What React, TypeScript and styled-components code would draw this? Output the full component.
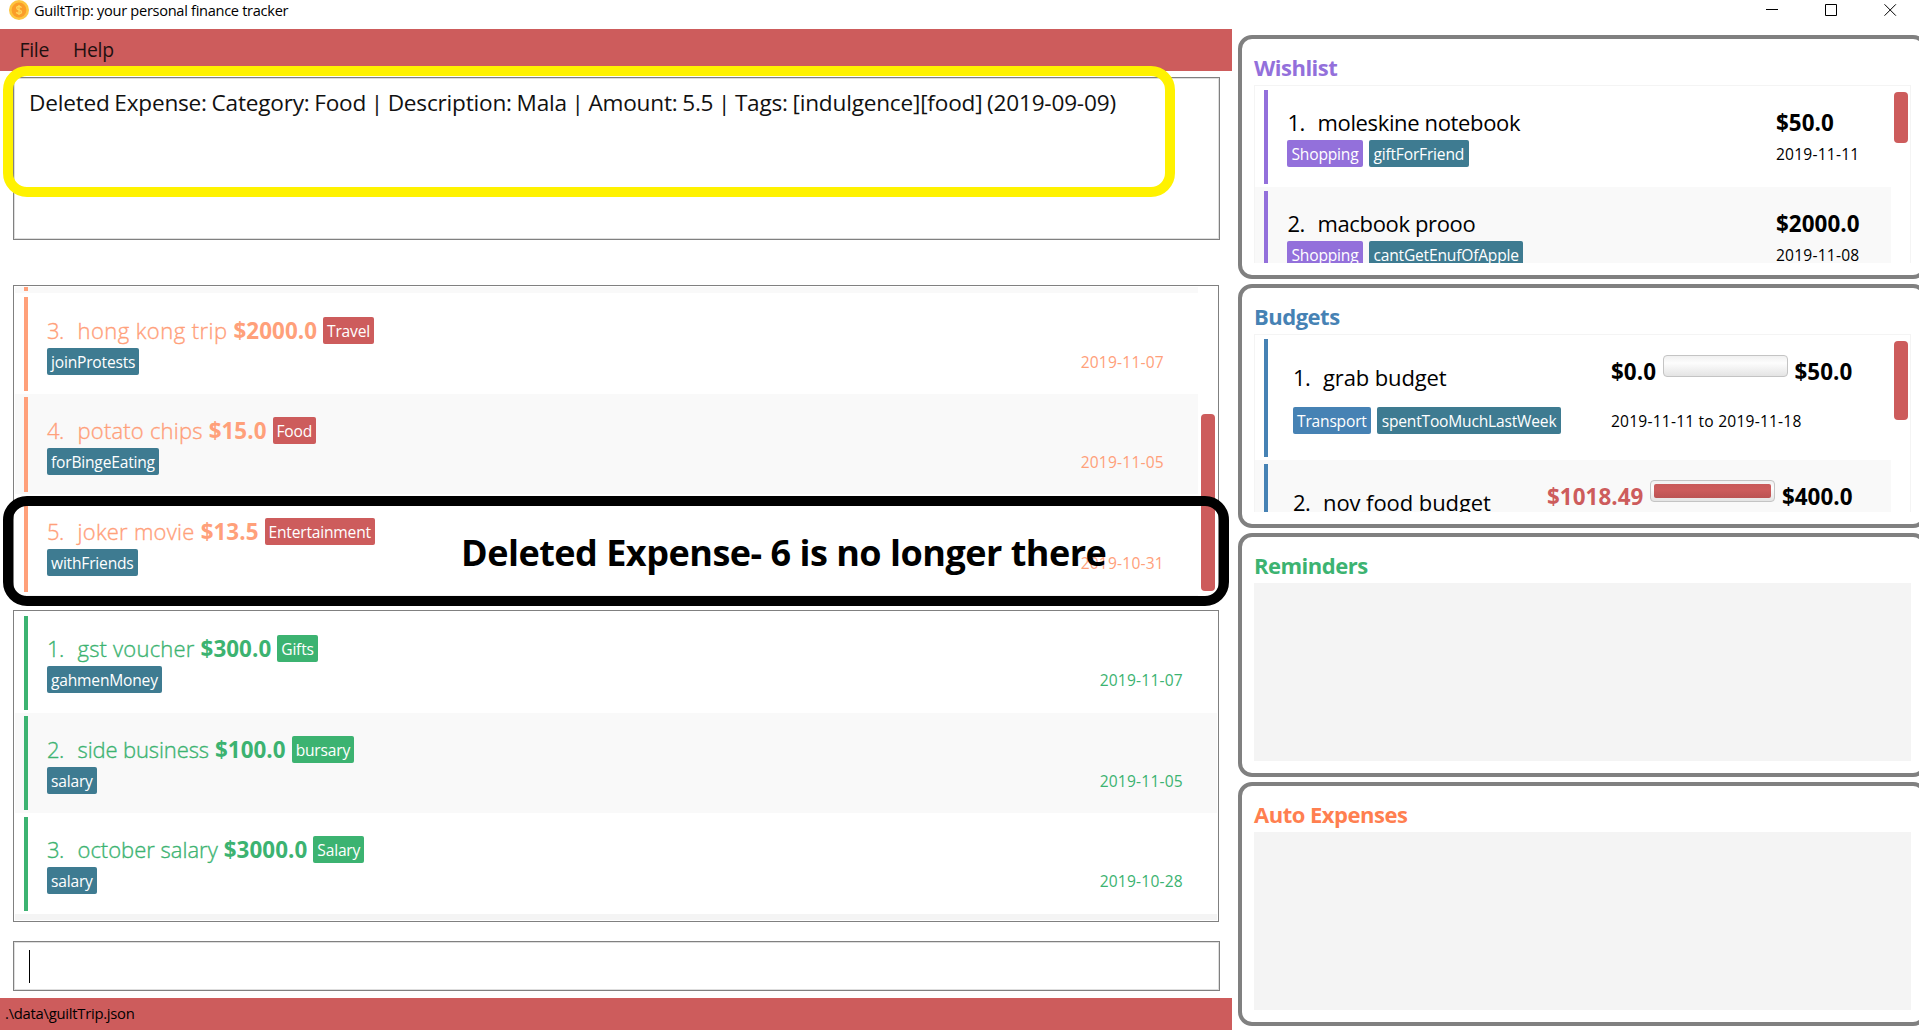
import React from "react";
import styled, { createGlobalStyle } from "styled-components";

const GlobalStyle = createGlobalStyle`
  *, *::before, *::after { box-sizing: border-box; }
  html, body { margin: 0; padding: 0; background: #fff; overflow: hidden; }
  body { font-family: "Open Sans", "Noto Sans", sans-serif; color: #000; }
`;

const palette = {
  red: "#cd5c5c",
  salmon: "#ffa07a",
  green: "#3cb371",
  purple: "#9370db",
  blue: "#4682b4",
  coral: "#ff7f50",
  tag: "#3e7b91",
};

const Window = styled.div`
  position: relative;
  width: 1919px;
  height: 1030px;
  overflow: hidden;
  display: flex;
  flex-direction: column;
  white-space: pre;
`;

const TitleBar = styled.header`
  flex: none;
  height: 29px;
  display: flex;
  align-items: flex-start;
  padding-left: 9px;
`;

const WindowTitle = styled.span`
  flex: 1;
  margin-left: 5px;
  font-size: 14.6px;
  line-height: 21px;
  letter-spacing: -0.3px;
`;

const WindowButtons = styled.div`
  display: flex;
  gap: 46px;
  padding: 4px 22px 0 0;
`;

const Body = styled.div`
  flex: 1;
  min-height: 0;
  display: flex;
`;

const MainColumn = styled.main`
  flex: none;
  width: 1232px;
  display: flex;
  flex-direction: column;
`;

const MenuBar = styled.nav`
  flex: none;
  height: 42px;
  display: flex;
  gap: 24px;
  padding-left: 19.5px;
  background: ${palette.red};
`;

const MenuItem = styled.span`
  font-size: 19.4px;
  line-height: 41px;
  letter-spacing: -0.3px;
  color: #1f1010;
`;

const ResultBox = styled.section`
  flex: none;
  width: 1207px;
  height: 163px;
  margin: 6px 0 0 13px;
  border: 1px solid #808080;
  box-shadow: inset 0 0 0 1px #dedede;
  padding: 10px 15px;
  font-size: 22.6px;
  line-height: 30px;
  letter-spacing: -0.2px;
  word-spacing: -1px;
  color: #111;
`;

const ListBox = styled.section<{ $height: number; $top: number }>`
  flex: none;
  width: 1206px;
  height: ${(p) => p.$height}px;
  margin: ${(p) => p.$top}px 0 0 13px;
  border: 1px solid #808080;
  padding: 1px;
  display: flex;
  overflow: hidden;
`;

const Rows = styled.div`
  flex: 1;
  min-width: 0;
  background: #f4f4f4;
  overflow: hidden;
`;

const Row = styled.div<{ $height: number; $striped?: boolean }>`
  height: ${(p) => p.$height}px;
  padding: 3.6px 0 2.8px 9px;
  background: ${(p) => (p.$striped ? "#f9f9f9" : "#fff")};
`;

const Card = styled.div<{ $color: string; $ink?: string }>`
  height: 100%;
  border-left: 4px solid ${(p) => p.$color};
  color: ${(p) => p.$ink ?? "#000"};
`;

const EntryCard = styled(Card)`
  display: flex;
  flex-direction: column;
  gap: 4px;
  padding: 19.7px 34px 0 19px;
`;

const Line = styled.div`
  display: flex;
  height: 27px;
  line-height: 27px;
`;

const Index = styled.span`
  width: 30px;
  font-size: 22px;
  letter-spacing: -0.5px;
`;

const Name = styled.span<{ $tracking?: number }>`
  font-size: 22px;
  letter-spacing: ${(p) => p.$tracking ?? -0.36}px;
`;

const LightName = styled(Name)`
  font-weight: 300;
  -webkit-text-stroke: 0.35px currentColor;
`;

const LightIndex = styled(Index)`
  width: 30.5px;
  font-weight: 300;
  -webkit-text-stroke: 0.35px currentColor;
`;

const Amount = styled.b<{ $color?: string }>`
  font-size: 22.4px;
  font-weight: 700;
  letter-spacing: 0.05px;
  color: ${(p) => p.$color ?? "inherit"};
`;

const EntryAmount = styled(Amount)`
  margin: 0 6px 0 6px;
`;

const Tag = styled.span<{ $color?: string }>`
  height: 27px;
  padding: 0 4px;
  border-radius: 2px;
  background: ${(p) => p.$color ?? palette.tag};
  color: #fff;
  font-size: 15.6px;
  line-height: 28px;
  letter-spacing: -0.2px;
`;

const DateText = styled.span`
  font-size: 15.6px;
  line-height: 29px;
  letter-spacing: 0.2px;
`;

const EntryDate = styled(DateText)`
  margin-left: auto;
`;

const SlimStrip = styled.div`
  height: 6.3px;
  padding: 0 0 2px 9px;
  background: #f9f9f9;
`;

const ScrollTrack = styled.div<{ $top: number }>`
  flex: none;
  width: 19px;
  padding: ${(p) => p.$top}px 2px 0 3px;
  background: #fff;
`;

const ScrollThumb = styled.div<{ $height: number }>`
  width: 14px;
  height: ${(p) => p.$height}px;
  border-radius: 4px;
  background: ${palette.red};
`;

const CommandBox = styled.section`
  flex: none;
  width: 1207px;
  height: 50px;
  margin: 19px 0 0 13px;
  border: 1px solid #808080;
  box-shadow: inset 0 0 0 1px #dedede;
  padding: 8px 15px;
`;

const Caret = styled.div`
  width: 1px;
  height: 33px;
  background: #000;
`;

const StatusBar = styled.footer`
  flex: none;
  height: 32px;
  margin-top: 7px;
  padding-left: 5px;
  background: ${palette.red};
  font-size: 14.8px;
  line-height: 31px;
  letter-spacing: -0.26px;
`;

const SideColumn = styled.aside`
  flex: none;
  width: 689px;
  margin-left: 6px;
  padding-top: 6px;
  display: flex;
  flex-direction: column;
  gap: 5px;
`;

const Panel = styled.section`
  flex: none;
  height: 244px;
  border: 4px solid #808080;
  border-radius: 14px;
  padding: 12px 12px 0;
`;

const PanelTitle = styled.h2<{ $color: string }>`
  margin: 0;
  height: 34px;
  font-size: 22px;
  line-height: 32px;
  font-weight: 700;
  letter-spacing: -0.5px;
  color: ${(p) => p.$color};
`;

const PanelList = styled.div`
  width: 657px;
  height: 178px;
  display: flex;
  overflow: hidden;
  background: #f4f4f4;
  padding: 1px 1px 0;
`;

const WishCard = styled(Card)`
  display: grid;
  grid-template-columns: 488.500px 1fr;
  grid-template-rows: 27px 27px;
  row-gap: 4px;
  padding: 19.6px 0 0 19.5px;
`;

const BudgetCard = styled(Card)`
  display: grid;
  grid-template-columns: 318px 1fr;
  grid-template-rows: 30px 27px;
  row-gap: 17px;
  padding: 21px 0 0 25px;
`;

const TagLine = styled(Line)`
  gap: 6px;
  margin-left: -0.500px;

  ${Tag} { padding: 0 4.500px; }
`;

const Meter = styled.div`
  width: 125px;
  height: 22px;
  margin: 0 7px 0 6.500px;
  padding: 3px;
  border: 1px solid #c4c4c4;
  border-radius: 4px;
  background: linear-gradient(#f0f0f0, #fdfdfd 35%, #e4e4e4);
`;

const MeterFill = styled.div`
  height: 100%;
  border-radius: 2px;
  background: linear-gradient(#c85a5a, #cd5c5c 40%, #bb5353);
`;

const Spending = styled.div<{ $shift?: number }>`
  display: flex;
  margin: -5px 0 0 ${(p) => p.$shift ?? 0}px;
`;

const SpendAmount = styled(Amount)`
  line-height: 34px;
`;

const BudgetName = styled(Line)`
  line-height: 34px;
`;

const HighlightFrame = styled.div<{ $color: string; $top: number; $width: number; $height: number }>`
  position: absolute;
  left: 3px;
  top: ${(p) => p.$top}px;
  width: ${(p) => p.$width}px;
  height: ${(p) => p.$height}px;
  border: 10px solid ${(p) => p.$color};
  border-radius: 24px;
`;

const Annotation = styled.strong`
  position: absolute;
  left: 461px;
  top: 530px;
  font-size: 36px;
  line-height: 46px;
  font-weight: 700;
  letter-spacing: -0.5px;
`;

type Entry = { no: number; name: string; tracking: number; amount: string; category: string; tag: string; date: string };

const expenses: Entry[] = [
  { no: 3, name: "hong kong trip", tracking: 0.45, amount: "$2000.0", category: "Travel", tag: "joinProtests", date: "2019-11-07" },
  { no: 4, name: "potato chips", tracking: 0.2, amount: "$15.0", category: "Food", tag: "forBingeEating", date: "2019-11-05" },
  { no: 5, name: "joker movie", tracking: 0.25, amount: "$13.5", category: "Entertainment", tag: "withFriends", date: "2019-10-31" },
];

const incomes: Entry[] = [
  { no: 1, name: "gst voucher", tracking: 0.2, amount: "$300.0", category: "Gifts", tag: "gahmenMoney", date: "2019-11-07" },
  { no: 2, name: "side business", tracking: -0.12, amount: "$100.0", category: "bursary", tag: "salary", date: "2019-11-05" },
  { no: 3, name: "october salary", tracking: 0, amount: "$3000.0", category: "Salary", tag: "salary", date: "2019-10-28" },
];

const wishes = [
  { no: 1, name: "moleskine notebook", amount: "$50.0", tag: "giftForFriend", date: "2019-11-11" },
  { no: 2, name: "macbook prooo", amount: "$2000.0", tag: "cantGetEnufOfApple", date: "2019-11-08" },
];

function EntryRow({ entry, color, categoryColor, striped }: { entry: Entry; color: string; categoryColor: string; striped: boolean }) {
  return (
    <Row $height={100.6} $striped={striped}>
      <EntryCard $color={color} $ink={color}>
        <Line>
          <LightIndex>{entry.no}.</LightIndex>
          <LightName $tracking={entry.tracking}>{entry.name}</LightName>
          <EntryAmount>{entry.amount}</EntryAmount>
          <Tag $color={categoryColor}>{entry.category}</Tag>
        </Line>
        <Line>
          <Tag>{entry.tag}</Tag>
          <EntryDate>{entry.date}</EntryDate>
        </Line>
      </EntryCard>
    </Row>
  );
}

function CoinIcon() {
  return (
    <svg width="20" height="20" viewBox="0 0 20 20">
      <circle cx="10" cy="10" r="10" fill="#fdc53f" />
      <circle cx="10" cy="10" r="7.4" fill="#fb9d28" />
      <path d="M12.4 7.8c-.3-1-1.2-1.4-2.4-1.4-1.300 0-2.300.6-2.300 1.700 0 2.500 4.800 1.200 4.800 3.800 0 1.100-1.100 1.700-2.500 1.700-1.300 0-2.300-.5-2.500-1.600M10 5v10" fill="none" stroke="#fed45a" strokeWidth="1.400" />
    </svg>
  );
}

export default function App() {
  return (
    <Window>
      <GlobalStyle />
      <TitleBar>
        <CoinIcon />
        <WindowTitle>GuiltTrip: your personal finance tracker</WindowTitle>
        <WindowButtons>
          <svg width="13" height="12" viewBox="0 0 13 12"><path d="M0 5.500h12" stroke="#000" /></svg>
          <svg width="13" height="12" viewBox="0 0 13 12"><path d="M.5.5h11v11H.5z" fill="none" stroke="#000" /></svg>
          <svg width="13" height="12" viewBox="0 0 13 12"><path d="M.5.3l11.400 11.400M11.900.3L.5 11.700" stroke="#000" /></svg>
        </WindowButtons>
      </TitleBar>
      <Body>
        <MainColumn>
          <MenuBar>
            <MenuItem>File</MenuItem>
            <MenuItem>Help</MenuItem>
          </MenuBar>
          <ResultBox>
            Deleted Expense: Category: Food | Description: Mala | Amount: 5.5 | Tags: [indulgence][food] (2019-09-09)
          </ResultBox>
          <ListBox $height={313} $top={45}>
            <Rows>
              <SlimStrip><Card $color={palette.salmon} /></SlimStrip>
              {expenses.map((e, i) => (
                <EntryRow key={e.no} entry={e} color={palette.salmon} categoryColor={palette.red} striped={i % 2 === 1} />
              ))}
            </Rows>
            <ScrollTrack $top={127}><ScrollThumb $height={177} /></ScrollTrack>
          </ListBox>
          <ListBox $height={312} $top={12}>
            <Rows>
              {incomes.map((e, i) => (
                <EntryRow key={e.no} entry={e} color={palette.green} categoryColor={palette.green} striped={i % 2 === 1} />
              ))}
            </Rows>
          </ListBox>
          <CommandBox><Caret /></CommandBox>
          <StatusBar>.\data\guiltTrip.json</StatusBar>
        </MainColumn>
        <SideColumn>
          <Panel>
            <PanelTitle $color={palette.purple}>Wishlist</PanelTitle>
            <PanelList>
              <Rows>
                {wishes.map((w, i) => (
                  <Row key={w.no} $height={101} $striped={i % 2 === 1}>
                    <WishCard $color={palette.purple}>
                      <Line><Index>{w.no}.</Index><Name>{w.name}</Name></Line>
                      <Line><Amount>{w.amount}</Amount></Line>
                      <TagLine><Tag $color={palette.purple}>Shopping</Tag><Tag>{w.tag}</Tag></TagLine>
                      <Line><DateText>{w.date}</DateText></Line>
                    </WishCard>
                  </Row>
                ))}
              </Rows>
              <ScrollTrack $top={6}><ScrollThumb $height={51} /></ScrollTrack>
            </PanelList>
          </Panel>
          <Panel>
            <PanelTitle $color={palette.blue}>Budgets</PanelTitle>
            <PanelList>
              <Rows>
                <Row $height={125}>
                  <BudgetCard $color={palette.blue}>
                    <BudgetName><Index>1.</Index><Name $tracking={-0.12}>grab budget</Name></BudgetName>
                    <Spending>
                      <SpendAmount>$0.0</SpendAmount>
                      <Meter />
                      <SpendAmount>$50.0</SpendAmount>
                    </Spending>
                    <TagLine><Tag $color={palette.blue}>Transport</Tag><Tag>spentTooMuchLastWeek</Tag></TagLine>
                    <Line><DateText>2019-11-11 to 2019-11-18</DateText></Line>
                  </BudgetCard>
                </Row>
                <Row $height={125} $striped>
                  <BudgetCard $color={palette.blue}>
                    <BudgetName><Index>2.</Index><Name $tracking={-0.08}>nov food budget</Name></BudgetName>
                    <Spending $shift={-64}>
                      <SpendAmount $color={palette.red}>$1018.49</SpendAmount>
                      <Meter><MeterFill /></Meter>
                      <SpendAmount>$400.0</SpendAmount>
                    </Spending>
                  </BudgetCard>
                </Row>
              </Rows>
              <ScrollTrack $top={6}><ScrollThumb $height={79} /></ScrollTrack>
            </PanelList>
          </Panel>
          <Panel>
            <PanelTitle $color={palette.green}>Reminders</PanelTitle>
            <PanelList />
          </Panel>
          <Panel>
            <PanelTitle $color={palette.coral}>Auto Expenses</PanelTitle>
            <PanelList />
          </Panel>
        </SideColumn>
      </Body>
      <HighlightFrame $color="#fff200" $top={66} $width={1172} $height={131} />
      <HighlightFrame $color="#000" $top={496} $width={1226} $height={110} />
      <Annotation>Deleted Expense- 6 is no longer there</Annotation>
    </Window>
  );
}
